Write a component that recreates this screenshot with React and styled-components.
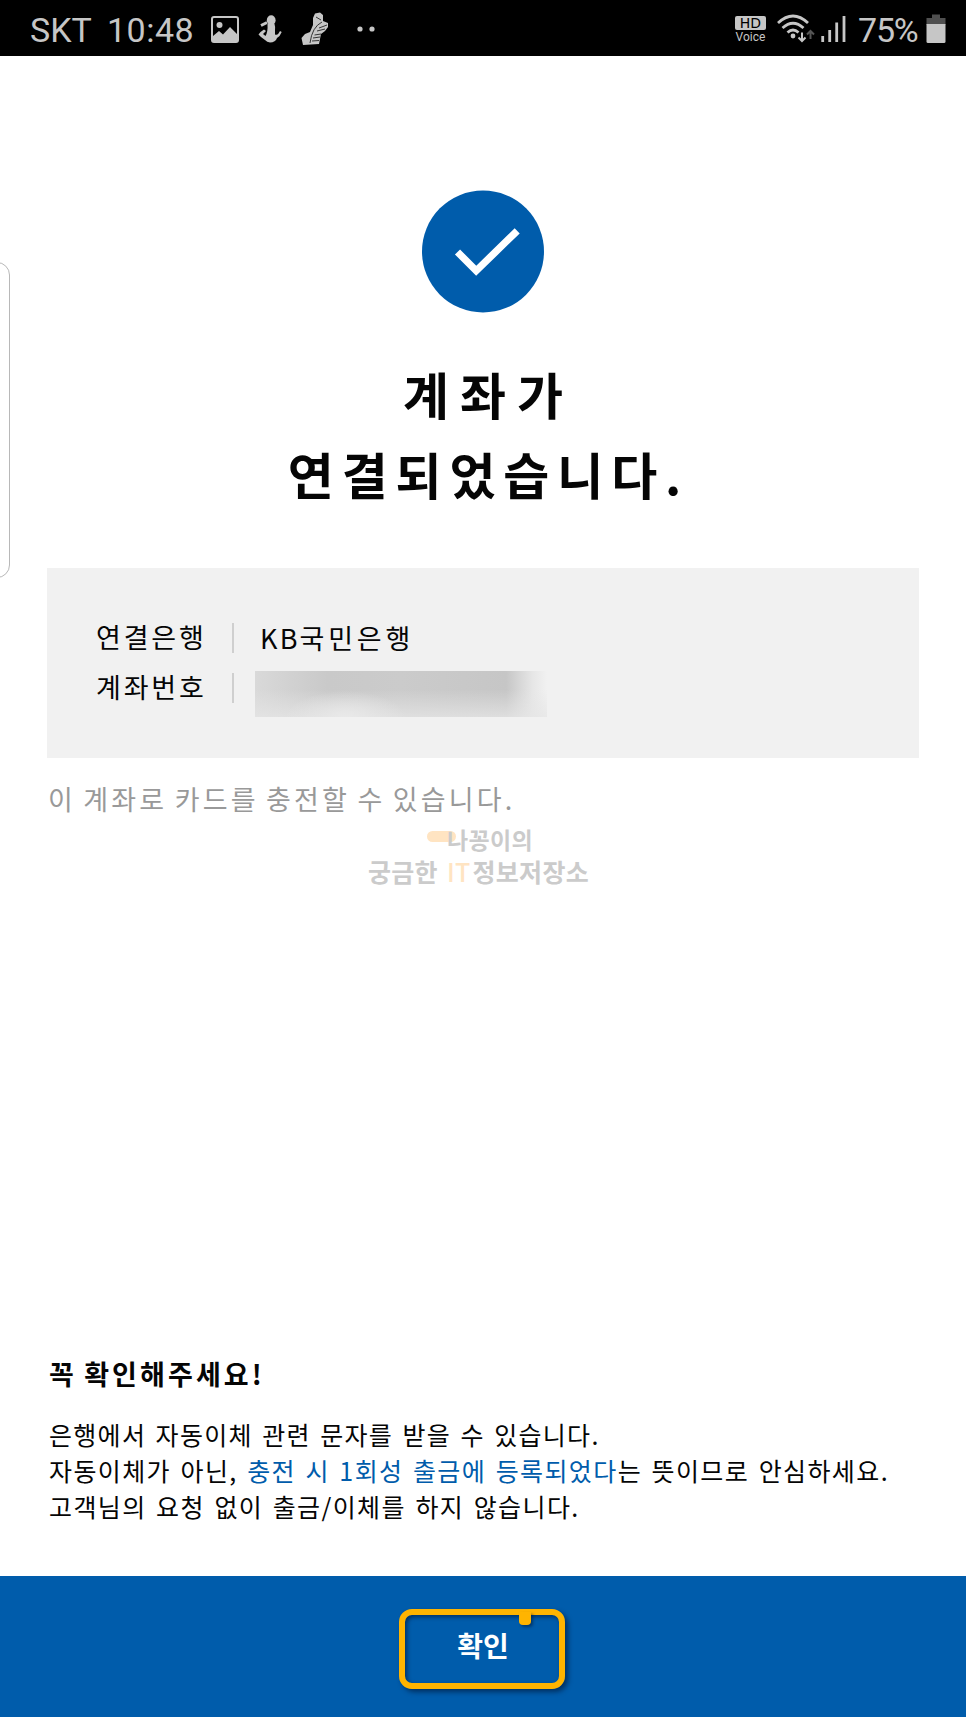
import styled, { createGlobalStyle } from "styled-components";

export default function App() {
  return (
    <>
      <GlobalStyle />
      <Screen>
        <StatusBar>
          <Carrier>SKT</Carrier>
          <Clock>10:48</Clock>
          <Notifications>
            <PictureIcon />
            <BodyIcon />
            <ShoeIcon />
            <MoreDots />
          </Notifications>
          <System>
            <HdVoice>
              <b>HD</b>
              <span>Voice</span>
            </HdVoice>
            <WifiIcon />
            <SignalIcon />
            <Percent>75%</Percent>
            <BatteryIcon />
          </System>
        </StatusBar>
        <EdgeHandle />

        <Main>
          <CheckIcon />
          <Title>
            <TitleLine $spacing="11px">계좌가</TitleLine>
            <TitleLine $spacing="7.9px">연결되었습니다.</TitleLine>
          </Title>

          <Account>
            <Row>
              <Label>연결은행</Label>
              <Value>
                <Latin>KB</Latin>국민은행
              </Value>
            </Row>
            <Row>
              <Label>계좌번호</Label>
              <Masked />
            </Row>
          </Account>
          <Hint>이 계좌로 카드를 충전할 수 있습니다.</Hint>

          <Watermark>
            <WatermarkTop>나꽁이의</WatermarkTop>
            <WatermarkBottom>
              궁금한 <em>IT</em>정보저장소
            </WatermarkBottom>
          </Watermark>

          <Notice>
            <h2>꼭 확인해주세요!</h2>
            <NoticeLine>은행에서 자동이체 관련 문자를 받을 수 있습니다.</NoticeLine>
            <NoticeLine $spacing="1.4px">
              자동이체가 아닌, <Blue>충전 시 1회성 출금에 등록되었다</Blue>는
              뜻이므로 안심하세요.
            </NoticeLine>
            <NoticeLine $spacing="1.4px">
              고객님의 요청 없이 출금/이체를 하지 않습니다.
            </NoticeLine>
          </Notice>
        </Main>

        <Footer>
          <Confirm>확인</Confirm>
        </Footer>
      </Screen>
    </>
  );
}

function PictureIcon() {
  return (
    <svg width="28" height="27" viewBox="0 0 28 27">
      <rect x="1" y="1" width="26" height="25" rx="2" fill="none" stroke="#c6c6c6" strokeWidth="2" />
      <circle cx="8.5" cy="9" r="3" fill="#c6c6c6" />
      <path d="M2 20 L8 15 L12 18.5 L19 11 L26 18 V25 H2 Z" fill="#c6c6c6" />
    </svg>
  );
}

function BodyIcon() {
  return (
    <svg width="24" height="28" viewBox="0 0 24 28">
      <ellipse cx="13.2" cy="5.2" rx="4.4" ry="5" fill="#c6c6c6" />
      <path
        d="M9.5 9 H16.5 Q17.5 12 17 15.5 L17 19.5 Q19 20.5 20.5 18.5 L22 16 L23.7 17 Q22 21.5 19 23 Q17.5 27.3 12 27.5 Q9 27.3 7 25 Q3 22.5 0.5 19.5 Q2.5 16.5 6 14.5 L8 16 L5 19 L7.5 21 Q10 17 9.5 9 Z"
        fill="#c6c6c6"
      />
      <path d="M3 10.5 L9 7.5" stroke="#c6c6c6" strokeWidth="3" />
    </svg>
  );
}

function ShoeIcon() {
  return (
    <svg width="28" height="34" viewBox="0 0 28 34">
      <path
        d="M12 6 L14 1.5 L19 0.5 L22 3 L22 9 L27 11 L27 15 L24 19 L20 22 L18 32 L2 33 L0.5 26 L4 22 L9 20 L12 13 Z"
        fill="#c6c6c6"
      />
      <path
        d="M21 10 Q11 15 9 31 M18 16 L26 13 M16 19 L24 17 M13.5 23 L20 22 M12 26 L19 25 M11 29 L18 28.5 M15 5 L20 8"
        fill="none"
        stroke="#222"
        strokeWidth="0.9"
      />
    </svg>
  );
}

function MoreDots() {
  return (
    <svg width="20" height="8" viewBox="0 0 20 8">
      <circle cx="4" cy="4" r="2.6" fill="#c6c6c6" />
      <circle cx="16" cy="4" r="2.6" fill="#c6c6c6" />
    </svg>
  );
}

function WifiIcon() {
  return (
    <svg width="38" height="30" viewBox="0 0 38 30">
      <g fill="none" stroke="#c6c6c6" strokeWidth="2.8">
        <path d="M1 9 Q16 -5 31 9" />
        <path d="M5.5 14 Q16 4.5 26.5 14" />
        <path d="M10.5 18.5 Q16 13.5 21.5 18.5" />
      </g>
      <circle cx="16" cy="22" r="2.4" fill="#c6c6c6" />
      <path d="M25 18.5 V27 M21.5 23.5 L25 27 L28.5 23.5" fill="none" stroke="#c6c6c6" strokeWidth="2" />
      <path d="M33.5 25 V17 M30 20.5 L33.5 17 L37 20.5" fill="none" stroke="#555" strokeWidth="2" />
    </svg>
  );
}

function SignalIcon() {
  return (
    <svg width="26" height="28" viewBox="0 0 26 28">
      <path d="M1.7 21 V27 M8.7 15 V27 M15.7 7.5 V27 M23 1 V27" stroke="#c6c6c6" strokeWidth="2.8" />
    </svg>
  );
}

function BatteryIcon() {
  return (
    <svg width="20" height="30" viewBox="0 0 20 30">
      <path d="M6 0.5 H14 V4 H19.5 V11 H0.5 V4 H6 Z" fill="#505050" />
      <path d="M0.5 10 H19.5 V27.5 Q19.5 29 18 29 H2 Q0.5 29 0.5 27.5 Z" fill="#c6c6c6" />
    </svg>
  );
}

function CheckIcon() {
  return (
    <svg width="123" height="123" viewBox="0 0 123 123">
      <circle cx="61" cy="61.5" r="61" fill="#005cab" />
      <path d="M35.5 62 L54.2 80.8 L95.2 40.8" fill="none" stroke="#fff" strokeWidth="7.2" />
    </svg>
  );
}

const GlobalStyle = createGlobalStyle`
  * {
    box-sizing: border-box;
  }
  body {
    margin: 0;
    background: #fff;
    font-family: "Noto Sans CJK KR", sans-serif;
    color: #050505;
  }
`;

const Screen = styled.div`
  position: relative;
  width: 966px;
  height: 1717px;
  display: flex;
  flex-direction: column;
  background: #fff;
  overflow: hidden;
  white-space: nowrap;
`;

const StatusBar = styled.header`
  height: 56px;
  display: flex;
  align-items: center;
  padding: 2px 20px 0 30px;
  background: #000;
  color: #c6c6c6;
  font-family: Roboto, sans-serif;
  font-size: 34px;
`;

const Carrier = styled.span`
  width: 77px;
  padding-top: 2px;
`;

const Clock = styled.span`
  width: 104px;
  padding-top: 2px;
  letter-spacing: 0.5px;
`;

const Notifications = styled.div`
  display: flex;
  align-items: center;
  gap: 19px;

  svg:last-child {
    margin-left: 8px;
  }
`;

const System = styled.div`
  margin-left: auto;
  display: flex;
  align-items: center;

  svg:nth-of-type(1) {
    margin: 0 6px 0 11px;
  }
`;

const HdVoice = styled.div`
  display: flex;
  flex-direction: column;
  align-items: center;

  b {
    width: 31px;
    height: 14px;
    border-radius: 2px;
    background: #c6c6c6;
    color: #000;
    font-family: "DejaVu Sans", sans-serif;
    font-size: 14px;
    font-weight: 400;
    line-height: 14px;
    text-align: center;
  }

  span {
    margin-top: 1px;
    font-size: 12px;
    line-height: 12px;
  }
`;

const Percent = styled.span`
  width: 68px;
  margin-left: 11px;
  padding-top: 2px;
  letter-spacing: -1.2px;
`;

const EdgeHandle = styled.div`
  position: absolute;
  left: -30px;
  top: 262px;
  width: 40px;
  height: 316px;
  border: 1.5px solid #b8b8b8;
  border-radius: 13px;
`;

const Main = styled.main`
  height: 1520px;
  display: flex;
  flex-direction: column;
  align-items: center;
  padding: 134px 47px 0;

  > svg {
    flex: none;
  }
`;

const Title = styled.h1`
  margin: 40px 0 0 11px;
  font-size: 50px;
  font-weight: 700;
  line-height: 80px;
  text-align: center;
`;

const TitleLine = styled.span`
  display: block;
  letter-spacing: ${(props) => props.$spacing};
`;

const Account = styled.section`
  width: 872px;
  height: 190px;
  margin-top: 55px;
  padding: 45px 0 0 49px;
  background: #f1f1f1;
`;

const Row = styled.div`
  height: 50px;
  display: flex;
  align-items: center;
  font-size: 27px;
  letter-spacing: 2.8px;
`;

const Label = styled.div`
  width: 138px;
  height: 30px;
  border-right: 2px solid #cfcfcf;
  line-height: 28px;
`;

const Value = styled.div`
  margin-left: 26px;
  line-height: 28px;
  letter-spacing: 3.8px;
`;

const Latin = styled.span`
  letter-spacing: 2.2px;
`;

const Masked = styled.div`
  width: 292px;
  height: 46px;
  margin: 12px 0 0 21px;
  background:
    radial-gradient(ellipse 60px 26px at 31% 100%, #e9e9e9 0%, transparent 100%),
    linear-gradient(180deg, transparent 40%, rgba(230, 230, 230, 0.75) 100%),
    linear-gradient(90deg, #d9d9d9 0%, #c9c9c9 25%, #cbcbcb 50%, #c6c6c6 86%, #e6e6e6 95%, #f1f1f1 100%);
`;

const Hint = styled.p`
  align-self: flex-start;
  margin: 23px 0 0 1px;
  color: #999;
  font-size: 27px;
  line-height: 36px;
  letter-spacing: 3.2px;
  word-spacing: -2px;
`;

const Watermark = styled.div`
  align-self: flex-start;
  margin: 7px 0 0 321px;
  color: #cbcbcb;
  font-weight: 700;
`;

const WatermarkTop = styled.div`
  display: flex;
  margin-left: 59px;
  font-size: 23px;
  line-height: 30px;
  letter-spacing: 0.3px;

  &::before {
    content: "";
    width: 29px;
    height: 11px;
    margin: 7px -9px 0 0;
    border-radius: 6px;
    background: #ffe4c2;
  }
`;

const WatermarkBottom = styled.div`
  font-size: 25px;
  line-height: 34px;
  letter-spacing: 0.3px;

  em {
    margin: 0 2px 0 3px;
    color: #ffe4c2;
    font-style: normal;
    font-weight: 500;
  }
`;

const Notice = styled.section`
  align-self: flex-start;
  margin: auto 0 52px 2px;

  h2 {
    margin: 0 0 24px;
    font-size: 27px;
    font-weight: 700;
    line-height: 36px;
    letter-spacing: 3.1px;
    word-spacing: -2px;
  }
`;

const NoticeLine = styled.p`
  margin: 0;
  font-size: 25px;
  line-height: 36px;
  letter-spacing: ${(props) => props.$spacing || "1.3px"};
  word-spacing: 2.5px;
`;

const Blue = styled.span`
  color: #005cab;
`;

const Footer = styled.footer`
  flex: 1;
  display: flex;
  align-items: flex-start;
  justify-content: center;
  padding: 33px 2px 0 0;
  background: #005cab;
`;

const Confirm = styled.button`
  position: relative;
  width: 166px;
  height: 80px;
  padding: 0 0 8px 2px;
  border: 6px solid #ffb400;
  border-radius: 13px;
  background: transparent;
  box-shadow: 3px 3px 5px rgba(0, 20, 50, 0.6), inset 2px 2px 4px rgba(0, 20, 50, 0.6);
  color: #fff;
  font-family: inherit;
  font-size: 28px;
  font-weight: 700;

  &::after {
    content: "";
    position: absolute;
    top: -3px;
    right: 28px;
    width: 12px;
    height: 13px;
    border-radius: 0 0 4px 4px;
    background: #ffb400;
    box-shadow: 2px 2px 3px rgba(0, 20, 50, 0.5);
  }
`;
